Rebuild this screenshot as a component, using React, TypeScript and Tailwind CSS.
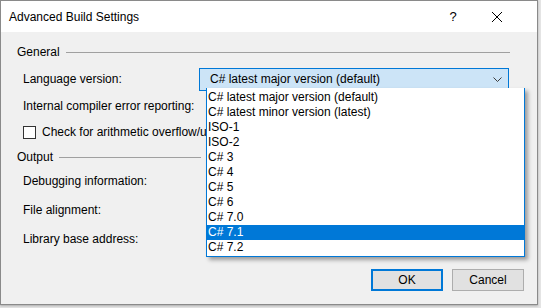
import React from "react";

const items = [
  "C# latest major version (default)",
  "C# latest minor version (latest)",
  "ISO-1",
  "ISO-2",
  "C# 3",
  "C# 4",
  "C# 5",
  "C# 6",
  "C# 7.0",
  "C# 7.1",
  "C# 7.2",
];

function Group({ title, lineW }: { title: string; lineW: string }) {
  return (
    <div className="flex items-center h-[20px] pl-[16px]">
      <span>{title}</span>
      <div className={`ml-[6px] h-px bg-[#a0a0a0] ${lineW}`} />
    </div>
  );
}

export default function App() {
  return (
    <div
      className="w-[541px] h-[308px] bg-[#e4e4e4] relative overflow-hidden text-[12px] text-black"
      style={{ fontFamily: '"Segoe UI", "Liberation Sans", Arial, sans-serif' }}
    >
      <div className="w-[538px] h-[305px] border border-[#8a8a8a] bg-[#f0f0f0] flex flex-col relative shadow-[0_1px_2px_rgba(0,0,0,0.25)]">
        {/* title bar */}
        <div className="h-[31px] bg-white flex items-center pl-[8px] shrink-0">
          <span className="flex-1 text-[12px]">Advanced Build Settings</span>
          <span className="w-[46px] text-center text-[13px] mr-[15px]">?</span>
          <svg width="12" height="12" viewBox="0 0 12 12" className="mr-[34px]">
            <path d="M1 1 L11 11 M11 1 L1 11" stroke="#000" strokeWidth="1" />
          </svg>
        </div>
        {/* body */}
        <div className="flex-1 flex flex-col pt-[10px]">
          <Group title="General" lineW="w-[444px]" />
          <div className="flex items-center h-[24px] mt-[5px] pl-[22px]">
            <span className="w-[176px]">Language version:</span>
            <div className="w-[310px] h-[23px] border border-[#0078d7] bg-[#cce4f7] flex items-center pl-[10px] pr-[6px]">
              <span className="flex-1">C# latest major version (default)</span>
              <svg width="9" height="5" viewBox="0 0 9 5">
                <path d="M0.5 0.5 L4.5 4.5 L8.5 0.5" stroke="#3c3c3c" fill="none" strokeWidth="1" />
              </svg>
            </div>
          </div>
          <div className="flex items-center h-[20px] mt-[5px] pl-[22px]">
            <span>Internal compiler error reporting:</span>
          </div>
          <div className="flex items-center h-[20px] mt-[6px] pl-[22px]">
            <div className="w-[13px] h-[13px] border border-[#333] bg-white shrink-0" />
            <span className="ml-[6px] w-[164px] overflow-hidden whitespace-nowrap">
              Check for arithmetic overflow/underflow
            </span>
          </div>
          <div className="mt-[5px]">
            <Group title="Output" lineW="w-[142px]" />
          </div>
          <div className="flex items-center h-[20px] mt-[4px] pl-[22px]">
            <span>Debugging information:</span>
          </div>
          <div className="flex items-center h-[20px] mt-[9px] pl-[22px]">
            <span>File alignment:</span>
          </div>
          <div className="flex items-center h-[20px] mt-[9px] pl-[22px]">
            <span>Library base address:</span>
          </div>
          <div className="flex justify-end gap-[9px] mt-[20px] pr-[13px]">
            <div className="w-[72px] h-[22px] border-2 border-[#0078d7] bg-[#e1e1e1] flex items-center justify-center">
              OK
            </div>
            <div className="w-[72px] h-[22px] border border-[#adadad] bg-[#e1e1e1] flex items-center justify-center">
              Cancel
            </div>
          </div>
        </div>

        {/* dropdown overlay */}
        <div className="absolute left-[205px] top-[87px] w-[319px] border border-[#0078d7] border-t-0 bg-white shadow-[3px_3px_4px_rgba(0,0,0,0.35)] pt-[2px] pb-px">
          {items.map((it) => (
            <div
              key={it}
              className={`h-[15px] leading-[15px] pl-[1px] ${
                it === "C# 7.1" ? "bg-[#0078d7] text-white" : ""
              }`}
            >
              {it}
            </div>
          ))}
        </div>
      </div>
    </div>
  );
}
